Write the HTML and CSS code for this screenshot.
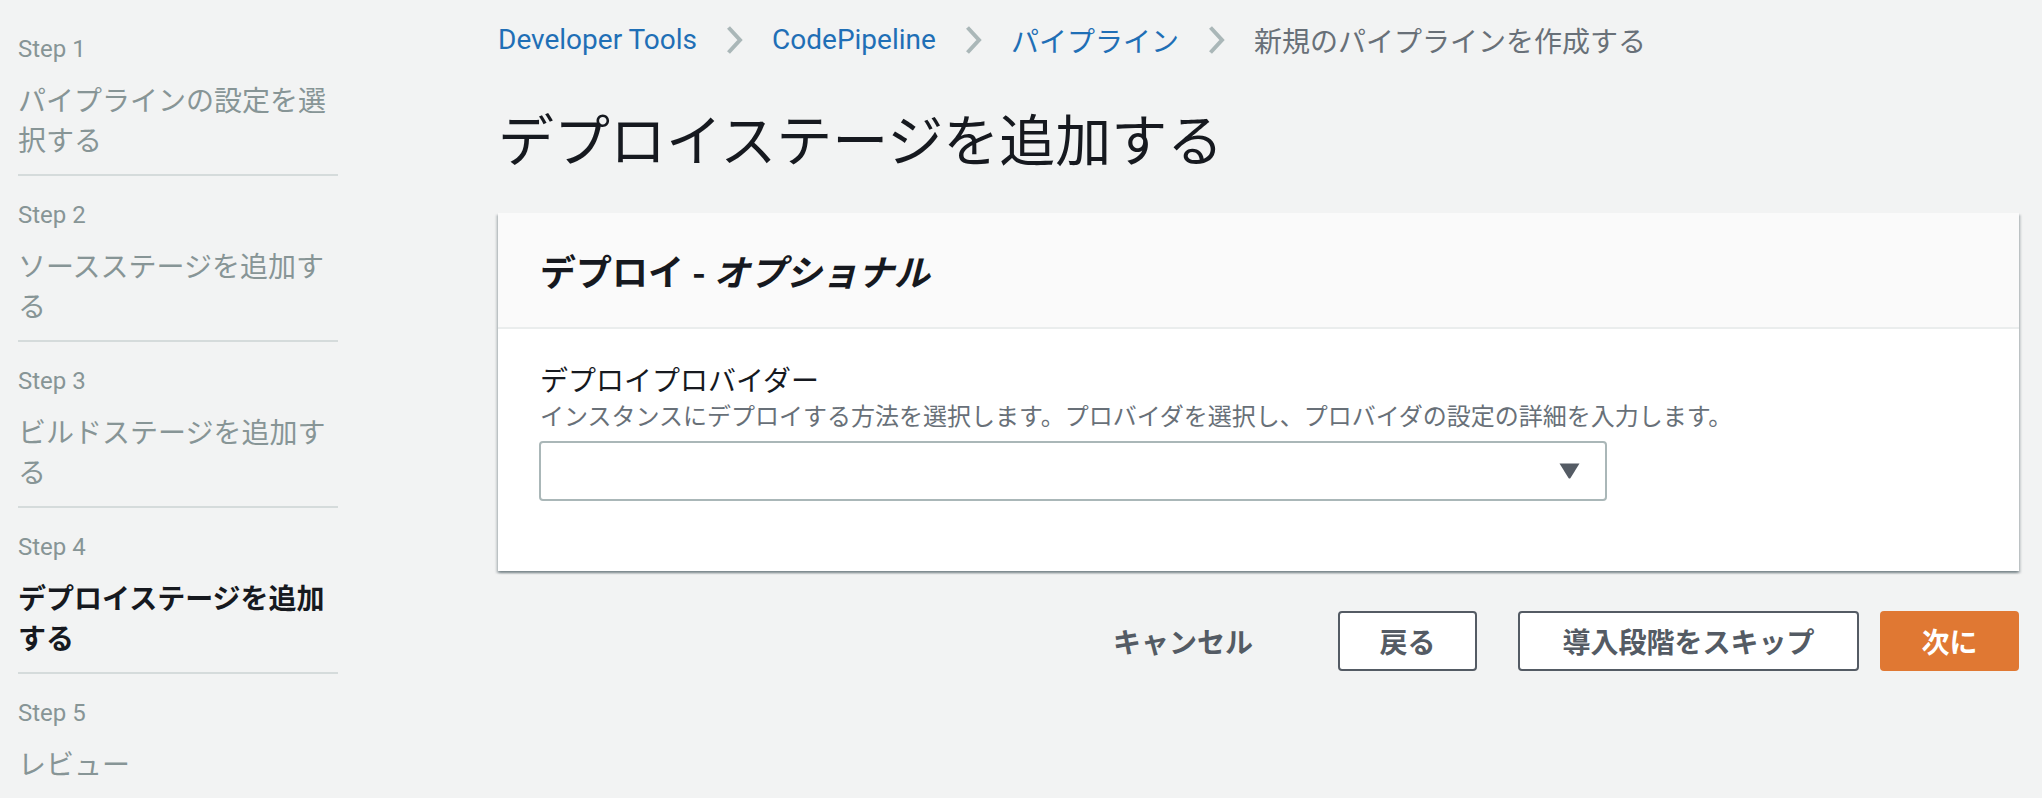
FILE: index.html
```html
<!DOCTYPE html>
<html lang="ja">
<head>
<meta charset="utf-8">
<title>デプロイステージを追加する</title>
<link rel="stylesheet" href="styles.css">
</head>
<body>
<div class="page">
  <nav class="steps">
    <div class="step">
      <div class="step-label">Step 1</div>
      <div class="step-name">パイプラインの設定を選択する</div>
    </div>
    <div class="step">
      <div class="step-label">Step 2</div>
      <div class="step-name">ソースステージを追加する</div>
    </div>
    <div class="step">
      <div class="step-label">Step 3</div>
      <div class="step-name">ビルドステージを追加する</div>
    </div>
    <div class="step">
      <div class="step-label">Step 4</div>
      <div class="step-name active">デプロイステージを追加する</div>
    </div>
    <div class="step last">
      <div class="step-label">Step 5</div>
      <div class="step-name">レビュー</div>
    </div>
  </nav>
  <main class="main">
    <div class="breadcrumbs">
      <a class="crumb link latin">Developer Tools</a>
      <svg class="chev" width="17" height="30" viewBox="0 0 17 30"><polyline points="2.5,2.5 14,15 2.5,27.5" fill="none" stroke="#aab7b8" stroke-width="4"/></svg>
      <a class="crumb link latin">CodePipeline</a>
      <svg class="chev" width="17" height="30" viewBox="0 0 17 30"><polyline points="2.5,2.5 14,15 2.5,27.5" fill="none" stroke="#aab7b8" stroke-width="4"/></svg>
      <a class="crumb link jp">パイプライン</a>
      <svg class="chev" width="17" height="30" viewBox="0 0 17 30"><polyline points="2.5,2.5 14,15 2.5,27.5" fill="none" stroke="#aab7b8" stroke-width="4"/></svg>
      <span class="crumb current jp">新規のパイプラインを作成する</span>
    </div>
    <h1 class="title">デプロイステージを追加する</h1>
    <section class="card">
      <div class="card-header">
        <h2 class="card-title">デプロイ - <em>オプショナル</em></h2>
      </div>
      <div class="card-body">
        <div class="field-label">デプロイプロバイダー</div>
        <div class="field-desc">インスタンスにデプロイする方法を選択します。プロバイダを選択し、プロバイダの設定の詳細を入力します。</div>
        <div class="select">
          <svg class="caret" width="21" height="16" viewBox="0 0 21 16"><path d="M0.5 0.5 H20.5 L11.5 15 Q10.5 16 9.5 15 Z" fill="#545b64"/></svg>
        </div>
      </div>
    </section>
    <div class="actions">
      <span class="btn-cancel">キャンセル</span>
      <span class="btn btn-back">戻る</span>
      <span class="btn btn-skip">導入段階をスキップ</span>
      <span class="btn btn-next">次に</span>
    </div>
  </main>
</div>
</body>
</html>
```
FILE: styles.css
```css
html, body {
  margin: 0;
  padding: 0;
  background: #f2f3f3;
}
body {
  font-family: Roboto, "Noto Sans CJK JP", sans-serif;
  color: #16191f;
}
.page {
  display: flex;
  align-items: flex-start;
}
.steps {
  width: 320px;
  margin-left: 18px;
  padding-top: 10px;
  flex-shrink: 0;
}
.step {
  padding: 23px 0 15px;
  border-bottom: 2px solid #d5dbdb;
}
.step.last {
  border-bottom: none;
}
.step-label {
  font-family: Roboto, sans-serif;
  font-size: 24px;
  line-height: 32px;
  color: #879596;
}
.step-name {
  margin-top: 14px;
  font-family: "Noto Sans CJK JP", sans-serif;
  font-size: 28px;
  line-height: 40px;
  color: #879596;
}
.step-name.active {
  font-weight: 700;
  color: #16191f;
}
.main {
  flex: 1;
  margin-left: 160px;
  padding: 12px 23px 0 0;
  min-width: 0;
}
.breadcrumbs {
  display: flex;
  align-items: center;
  height: 56px;
}
.crumb {
  font-size: 28px;
  line-height: 40px;
  text-decoration: none;
}
.crumb.latin {
  font-family: Roboto, sans-serif;
}
.crumb.jp {
  font-family: "Noto Sans CJK JP", sans-serif;
}
.link {
  color: #1f6fb6;
}
.current {
  color: #687078;
}
.chev {
  margin: 0 29px;
  display: block;
}
.title {
  margin: 33px 0 0;
  font-family: "Noto Sans CJK JP", sans-serif;
  font-size: 56px;
  line-height: 72px;
  font-weight: 400;
  color: #16191f;
}
.card {
  margin-top: 40px;
  background: #fff;
  box-shadow: 0 2px 2px 0 rgba(0, 28, 36, 0.3), 2px 2px 2px 0 rgba(0, 28, 36, 0.15), -2px 2px 2px 0 rgba(0, 28, 36, 0.15);
}
.card-header {
  background: #fafafa;
  padding: 35px 42px;
  border-bottom: 2px solid #eaeded;
}
.card-title {
  margin: 0;
  font-family: "Noto Sans CJK JP", sans-serif;
  font-size: 36px;
  line-height: 44px;
  font-weight: 700;
}
.card-title em {
  font-style: italic;
}
.card-body {
  padding: 30px 42px 70px 42px;
}
.field-label {
  font-family: "Noto Sans CJK JP", sans-serif;
  font-size: 28px;
  line-height: 40px;
  color: #16191f;
}
.field-desc {
  font-family: "Noto Sans CJK JP", sans-serif;
  font-size: 24px;
  line-height: 32px;
  color: #687078;
}
.select {
  margin-top: 10px;
  margin-left: -1px;
  width: 1068px;
  height: 60px;
  box-sizing: border-box;
  border: 2px solid #aab7b8;
  border-radius: 4px;
  background: #fff;
  display: flex;
  align-items: center;
  justify-content: flex-end;
  padding-right: 25px;
}
.caret {
  display: block;
}
.actions {
  display: flex;
  justify-content: flex-end;
  align-items: center;
  margin-top: 40px;
  font-family: "Noto Sans CJK JP", sans-serif;
  font-size: 28px;
  font-weight: 700;
}
.btn-cancel {
  color: #545b64;
  line-height: 60px;
  margin-right: 85px;
}
.btn {
  box-sizing: border-box;
  height: 60px;
  display: flex;
  align-items: center;
  justify-content: center;
  border-radius: 4px;
  color: #545b64;
}
.btn-back {
  width: 139px;
  border: 2px solid #545b64;
  background: #fff;
  margin-right: 41px;
}
.btn-skip {
  width: 341px;
  border: 2px solid #545b64;
  background: #fff;
  margin-right: 21px;
}
.btn-next {
  width: 139px;
  background: #e07833;
  color: #fff;
}
```
